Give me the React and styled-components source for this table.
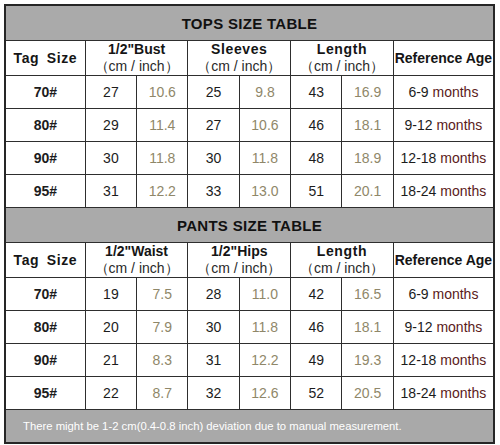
import React from "react";
import styled, { createGlobalStyle } from "styled-components";

const GlobalStyle = createGlobalStyle`
  body {
    margin: 0;
    background: #ffffff;
    font-family: "Liberation Sans", Arial, sans-serif;
  }
`;

const Page = styled.div`
  width: 500px;
  height: 445px;
  padding: 4px 0 0 4px;
  box-sizing: border-box;
`;

const Table = styled.table`
  width: 491px;
  border-collapse: collapse;
  table-layout: fixed;
  border: 2px solid #262626;
  color: #1a1a1a;
`;

const Cell = styled.td`
  border: 1px solid #2e2e2e;
  height: 32px;
  padding: 0;
  text-align: center;
  vertical-align: middle;
  font-size: 14px;
  line-height: 17px;
  color: ${(p) => (p.$inch ? "#8f8769" : "#1c1c1c")};
  font-weight: ${(p) => (p.$bold ? 700 : 400)};
`;

const TitleCell = styled.td`
  background: #aaaaaa;
  border: 1px solid #2e2e2e;
  height: 34px;
  padding: 0;
  text-align: center;
  font-size: 15px;
  font-weight: 700;
  letter-spacing: 0.3px;
  color: #111;
`;

const HeadCell = styled.td`
  border: 1px solid #2e2e2e;
  height: 33px;
  padding: 0;
  text-align: center;
  font-size: 14px;
  line-height: 17px;
  font-weight: 700;
  letter-spacing: ${(p) => (p.$wide ? "0.6px" : "0")};
  word-spacing: ${(p) => (p.$wide ? "3px" : "0")};
  color: #151515;
`;

const Unit = styled.div`
  font-weight: 400;
  letter-spacing: 0;
  word-spacing: 0;
  color: #2a2a2a;
`;

const Months = styled.span`
  color: #5a1a1a;
`;

const FootCell = styled.td`
  background: #a9a9a9;
  border: 1px solid #2e2e2e;
  height: 32px;
  padding: 0 0 0 17px;
  text-align: left;
  font-size: 11.3px;
  color: #ffffff;
`;

const tops = {
  title: "TOPS SIZE TABLE",
  heads: ["1/2\"Bust", "Sleeves", "Length"],
  rows: [
    ["70#", "27", "10.6", "25", "9.8", "43", "16.9", "6-9"],
    ["80#", "29", "11.4", "27", "10.6", "46", "18.1", "9-12"],
    ["90#", "30", "11.8", "30", "11.8", "48", "18.9", "12-18"],
    ["95#", "31", "12.2", "33", "13.0", "51", "20.1", "18-24"],
  ],
};

const pants = {
  title: "PANTS SIZE TABLE",
  heads: ["1/2\"Waist", "1/2\"Hips", "Length"],
  rows: [
    ["70#", "19", "7.5", "28", "11.0", "42", "16.5", "6-9"],
    ["80#", "20", "7.9", "30", "11.8", "46", "18.1", "9-12"],
    ["90#", "21", "8.3", "31", "12.2", "49", "19.3", "12-18"],
    ["95#", "22", "8.7", "32", "12.6", "52", "20.5", "18-24"],
  ],
};

function Section({ data }) {
  return (
    <>
      <tr>
        <TitleCell colSpan={8}>{data.title}</TitleCell>
      </tr>
      <tr>
        <HeadCell $wide>Tag Size</HeadCell>
        {data.heads.map((h) => (
          <HeadCell key={h} colSpan={2} $wide={h === "Length" || h === "Sleeves"}>
            {h}
            <Unit>（cm / inch）</Unit>
          </HeadCell>
        ))}
        <HeadCell>Reference Age</HeadCell>
      </tr>
      {data.rows.map((r) => (
        <tr key={r[0]}>
          <Cell $bold>{r[0]}</Cell>
          <Cell>{r[1]}</Cell>
          <Cell $inch>{r[2]}</Cell>
          <Cell>{r[3]}</Cell>
          <Cell $inch>{r[4]}</Cell>
          <Cell>{r[5]}</Cell>
          <Cell $inch>{r[6]}</Cell>
          <Cell>
            {r[7]} <Months>months</Months>
          </Cell>
        </tr>
      ))}
    </>
  );
}

export default function App() {
  return (
    <Page>
      <GlobalStyle />
      <Table>
        <colgroup>
          <col style={{ width: 75 }} />
          <col style={{ width: 48 }} />
          <col style={{ width: 48 }} />
          <col style={{ width: 48 }} />
          <col style={{ width: 48 }} />
          <col style={{ width: 48 }} />
          <col style={{ width: 48 }} />
          <col style={{ width: 94 }} />
        </colgroup>
        <tbody>
          <Section data={tops} />
          <Section data={pants} />
          <tr>
            <FootCell colSpan={8}>
              There might be 1-2 cm(0.4-0.8 inch) deviation due to manual measurement.
            </FootCell>
          </tr>
        </tbody>
      </Table>
    </Page>
  );
}
